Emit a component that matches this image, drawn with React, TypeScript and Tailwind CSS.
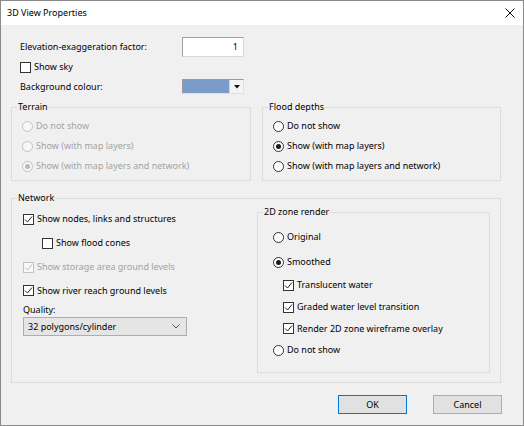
import React from 'react'

type OptProps = { label: string; checked?: boolean; disabled?: boolean }

const Radio = ({ label, checked, disabled }: OptProps) => (
  <div className="flex items-center gap-[3px]">
    <span
      className={
        disabled
          ? 'w-[11px] h-[11px] rounded-full border border-[#c2c2c2] bg-[#f7f7f7] flex items-center justify-center'
          : 'w-[11px] h-[11px] rounded-full border border-[#333333] bg-white flex items-center justify-center'
      }
    >
      {checked && (
        <span
          className={
            disabled
              ? 'w-[5px] h-[5px] rounded-full bg-[#b8b8b8]'
              : 'w-[5px] h-[5px] rounded-full bg-[#1a1a1a]'
          }
        />
      )}
    </span>
    <span className={disabled ? 'text-[#a3a3a3]' : ''}>{label}</span>
  </div>
)

const Check = ({ label, checked, disabled }: OptProps) => (
  <div className="flex items-center gap-[3px]">
    <span
      className={
        disabled
          ? 'w-[11px] h-[11px] border border-[#c2c2c2] bg-[#f7f7f7] flex items-center justify-center'
          : 'w-[11px] h-[11px] border border-[#333333] bg-white flex items-center justify-center'
      }
    >
      {checked && (
        <svg width="9" height="9" viewBox="0 0 9 9">
          <path
            d="M1 4.5 L3.5 7 L8 1.5"
            fill="none"
            stroke={disabled ? '#bdbdbd' : '#222222'}
            strokeWidth="1"
          />
        </svg>
      )}
    </span>
    <span className={disabled ? 'text-[#a3a3a3]' : ''}>{label}</span>
  </div>
)

export default function App() {
  return (
    <div className="w-[524px] h-[426px] border border-[#8a8a8a] bg-[#f0f0f0] flex flex-col font-['Noto_Sans',sans-serif] text-[9px] text-black leading-[14px]">
      {/* title bar */}
      <div className="h-[24px] shrink-0 bg-white flex items-center justify-between pl-[6px] pr-[8px]">
        <span>3D View Properties</span>
        <svg width="10" height="10" viewBox="0 0 10 10">
          <path d="M0.5 0.5 L9.5 9.5 M9.5 0.5 L0.5 9.5" stroke="#111111" strokeWidth="1" />
        </svg>
      </div>

      <div className="mt-[12px] h-[20px] flex items-center pl-[19px]">
        <span className="w-[162px]">Elevation-exaggeration factor:</span>
        <div className="w-[62px] h-[20px] bg-white border border-[#a0a0a0] border-r-[#d9d9d9] border-b-[#d9d9d9] flex items-center justify-end pr-[5px]">
          1
        </div>
      </div>

      <div className="mt-[2px] h-[16px] flex items-center pl-[19px]">
        <Check label="Show sky" />
      </div>

      <div className="mt-[4px] h-[15px] flex items-center pl-[19px]">
        <span className="w-[162px]">Background colour:</span>
        <div className="w-[62px] h-[15px] flex border border-[#9a9a9a] border-r-[#e0e0e0] border-b-[#e0e0e0]">
          <div className="flex-1 bg-[#7b9cc9]" />
          <div className="w-[14px] bg-[#f4f4f4] border-l border-[#d5d5d5] flex items-center justify-center">
            <svg width="6" height="4" viewBox="0 0 6 4">
              <path d="M0 0 L6 0 L3 3.5 Z" fill="#111111" />
            </svg>
          </div>
        </div>
      </div>

      <div className="mt-[6px] flex pl-[10px] gap-[11px]">
        <fieldset className="w-[240px] border border-[#dcdcdc] pt-[2px] pb-[4px]">
          <legend className="ml-[5px] px-[1px]">Terrain</legend>
          <div className="pl-[10px]">
            <div className="h-[20px] flex items-center">
              <Radio label="Do not show" disabled />
            </div>
            <div className="h-[20px] flex items-center">
              <Radio label="Show (with map layers)" disabled />
            </div>
            <div className="h-[20px] flex items-center">
              <Radio label="Show (with map layers and network)" disabled checked />
            </div>
          </div>
        </fieldset>
        <fieldset className="w-[239px] border border-[#dcdcdc] pt-[2px] pb-[4px]">
          <legend className="ml-[5px] px-[1px]">Flood depths</legend>
          <div className="pl-[10px]">
            <div className="h-[20px] flex items-center">
              <Radio label="Do not show" />
            </div>
            <div className="h-[20px] flex items-center">
              <Radio label="Show (with map layers)" checked />
            </div>
            <div className="h-[20px] flex items-center">
              <Radio label="Show (with map layers and network)" />
            </div>
          </div>
        </fieldset>
      </div>

      <fieldset className="mt-[10px] ml-[10px] w-[490px] border border-[#dcdcdc] pb-[9px]">
        <legend className="ml-[5px] px-[1px]">Network</legend>
        <div className="flex items-start">
          <div className="w-[245px] pl-[11px] pt-[2px] flex flex-col">
            <div className="h-[24px] flex items-center">
              <Check label="Show nodes, links and structures" checked />
            </div>
            <div className="h-[24px] flex items-center pl-[19px]">
              <Check label="Show flood cones" />
            </div>
            <div className="h-[24px] flex items-center">
              <Check label="Show storage area ground levels" checked disabled />
            </div>
            <div className="h-[23px] flex items-center">
              <Check label="Show river reach ground levels" checked />
            </div>
            <div className="mt-[1px] h-[14px]">Quality:</div>
            <div className="w-[164px] h-[19px] bg-[#e5e5e5] border border-[#adadad] flex items-center justify-between pl-[4px] pr-[6px]">
              <span>32 polygons/cylinder</span>
              <svg width="8" height="5" viewBox="0 0 8 5">
                <path d="M0.5 0.5 L4 4 L7.5 0.5" fill="none" stroke="#555555" strokeWidth="1" />
              </svg>
            </div>
          </div>

          <fieldset className="w-[233px] border border-[#dcdcdc] pt-[8px] pb-[12px]">
            <legend className="ml-[5px] px-[1px]">2D zone render</legend>
            <div className="pl-[15px]">
              <div className="h-[20px] flex items-center">
                <Radio label="Original" />
              </div>
              <div className="mt-[5px] h-[20px] flex items-center">
                <Radio label="Smoothed" checked />
              </div>
              <div className="mt-[2px] pl-[10px]">
                <div className="h-[22px] flex items-center">
                  <Check label="Translucent water" checked />
                </div>
                <div className="h-[22px] flex items-center">
                  <Check label="Graded water level transition" checked />
                </div>
                <div className="h-[21px] flex items-center">
                  <Check label="Render 2D zone wireframe overlay" checked />
                </div>
              </div>
              <div className="mt-[1px] h-[20px] flex items-center">
                <Radio label="Do not show" />
              </div>
            </div>
          </fieldset>
        </div>
      </fieldset>

      <div className="mt-[12px] flex justify-end pr-[21px] gap-[26px]">
        <button className="w-[69px] h-[19px] bg-[#e1e1e1] border border-[#0078d7] flex items-center justify-center">
          OK
        </button>
        <button className="w-[69px] h-[19px] bg-[#e1e1e1] border border-[#adadad] flex items-center justify-center">
          Cancel
        </button>
      </div>
    </div>
  )
}
